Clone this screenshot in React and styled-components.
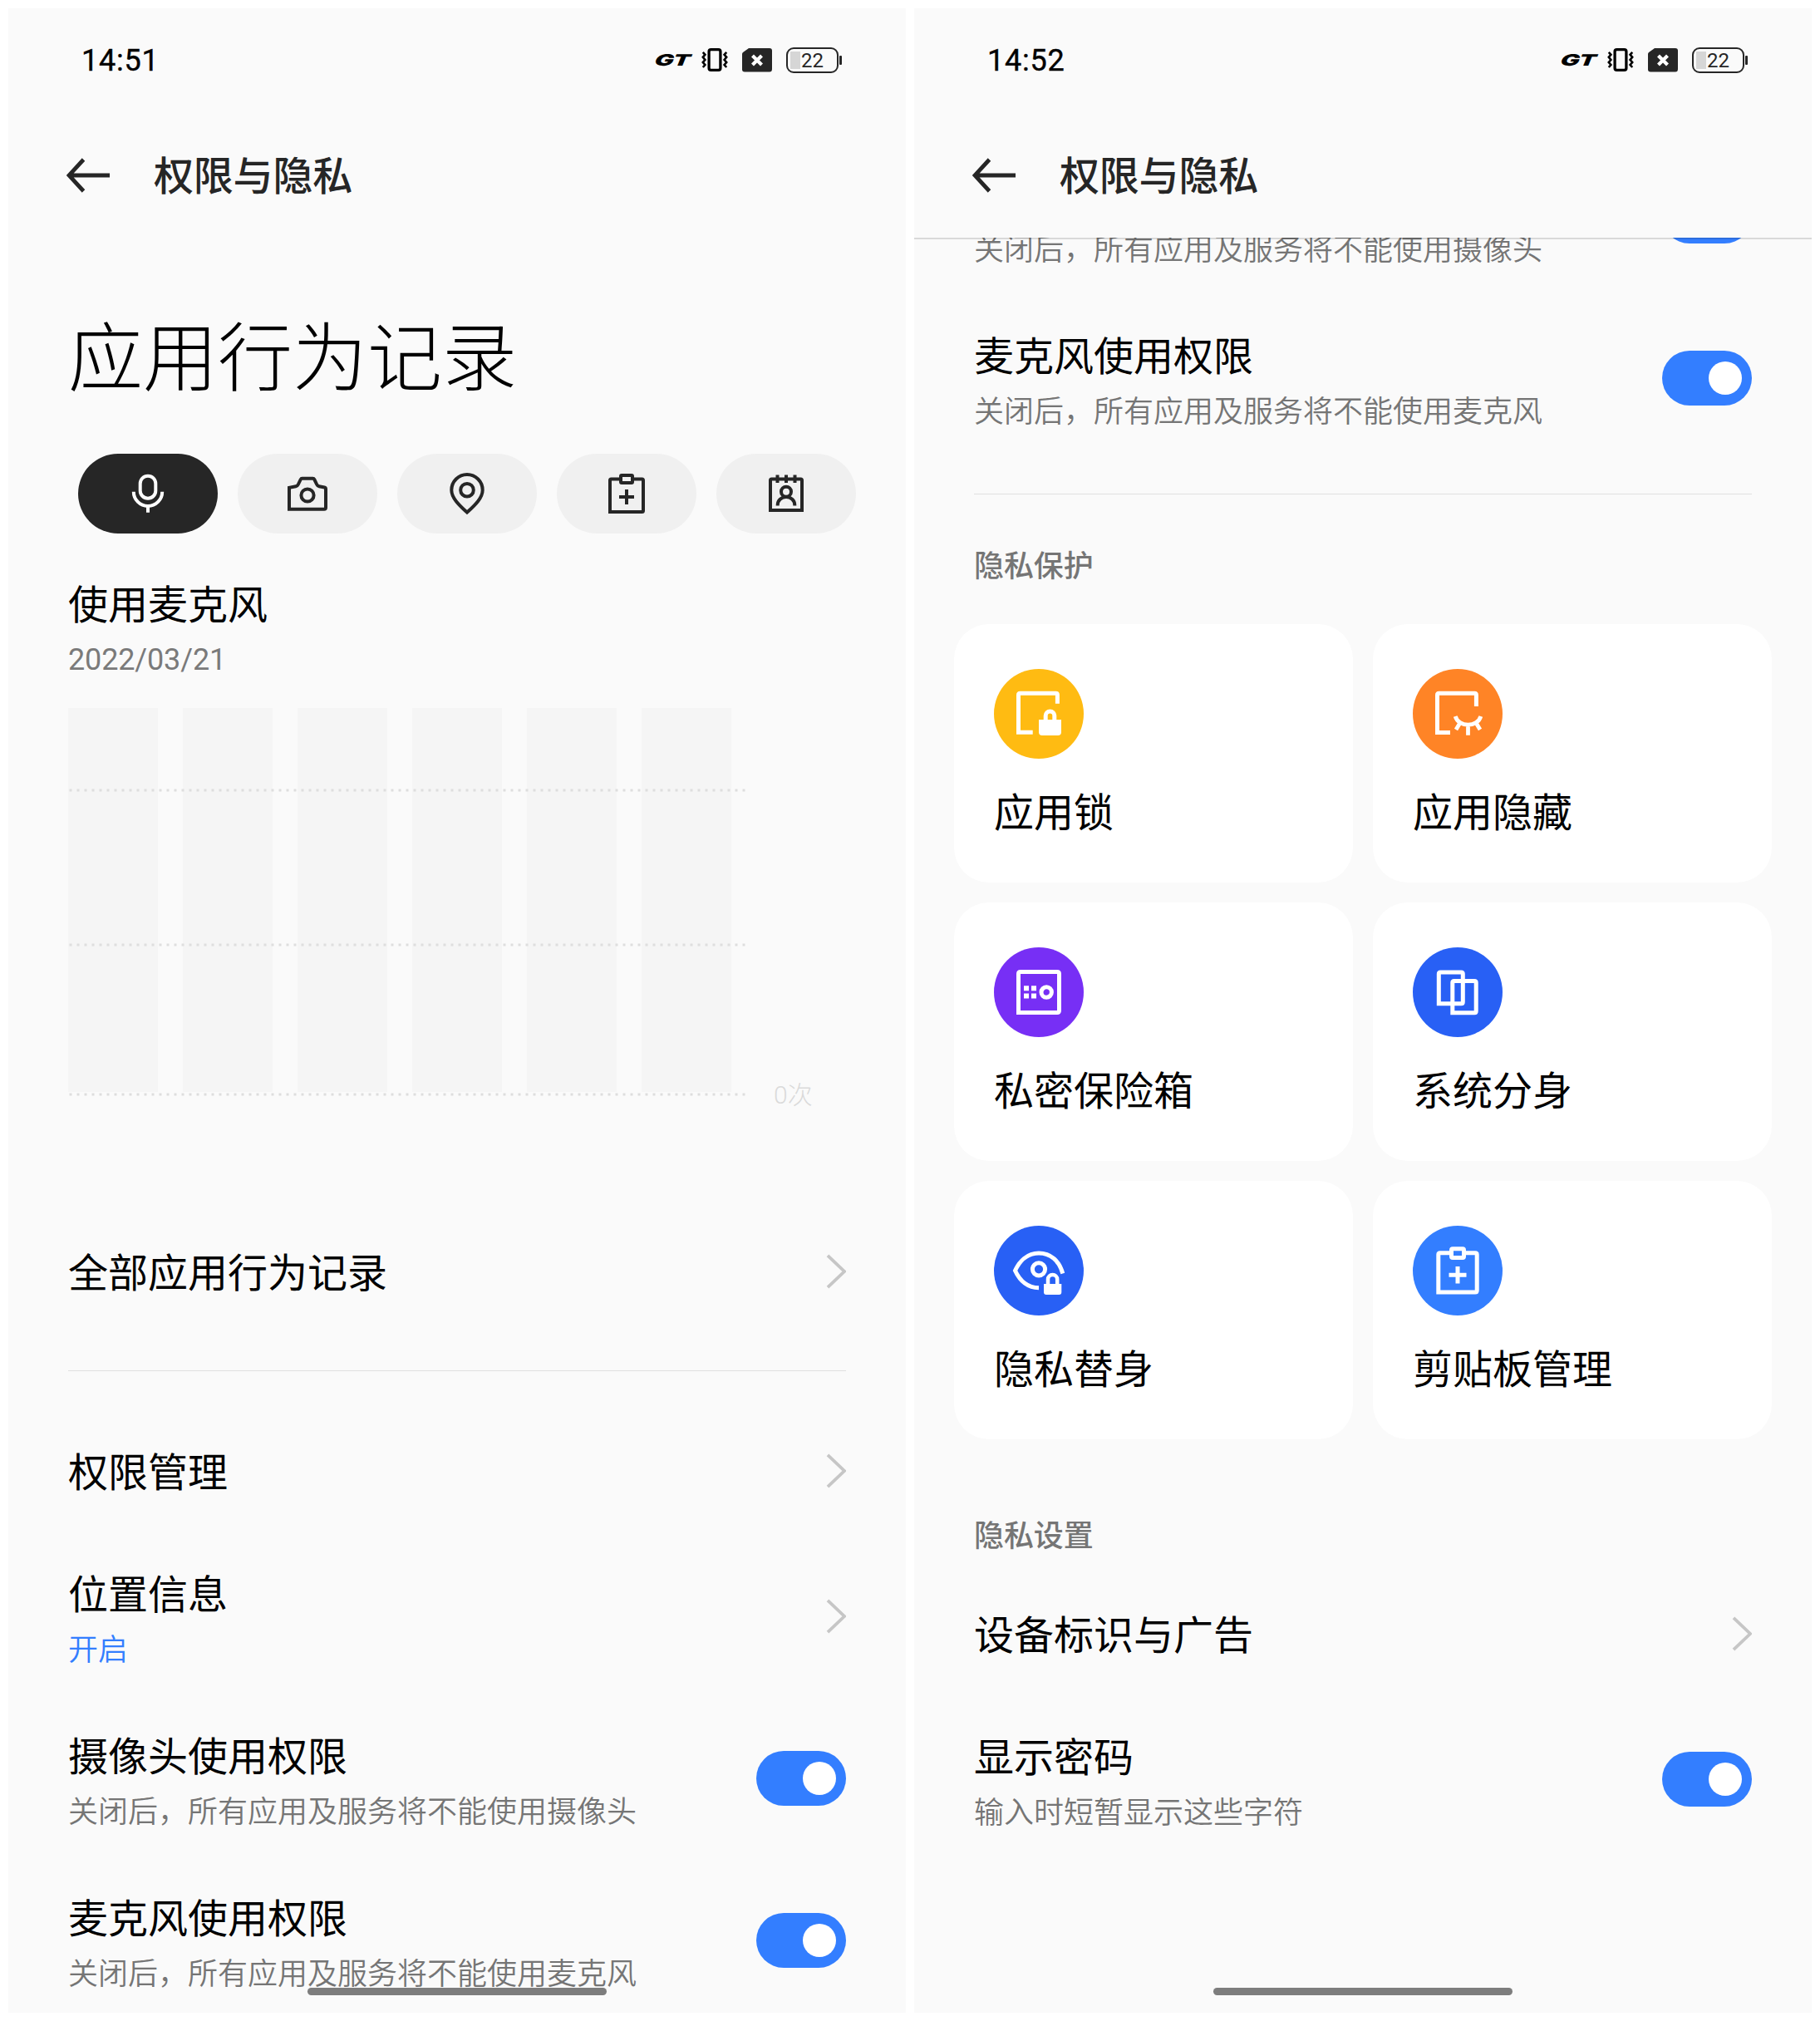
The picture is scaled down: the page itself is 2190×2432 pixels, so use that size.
import React, { useState } from "react";
import styled, { createGlobalStyle } from "styled-components";

const GlobalStyle = createGlobalStyle`
  * {
    box-sizing: border-box;
  }

  body {
    margin: 0;
    background: #ffffff;
    font-family: Roboto, "Noto Sans CJK SC", sans-serif;
    color: #000000;
  }
`;

const Page = styled.div`
  display: flex;
  gap: 10px;
  width: 2190px;
  height: 2432px;
  padding: 10px;
`;

const Phone = styled.section`
  position: relative;
  display: flex;
  flex-direction: column;
  width: 1080px;
  height: 2412px;
  overflow: hidden;
  background: #fafafa;
`;

const Header = styled.header`
  flex: none;
  position: relative;
  z-index: 1;
  background: #fafafa;
  box-shadow: ${(p) => (p.$scrolled ? "0 2px 0 rgba(0, 0, 0, 0.13)" : "none")};
`;

const StatusBar = styled.div`
  display: flex;
  align-items: center;
  justify-content: space-between;
  height: 124px;
  padding: 0 77px 0 88px;
`;

const Clock = styled.span`
  padding-top: 2px;
  font-size: 36px;
  line-height: 40px;
  letter-spacing: 0.8px;
  -webkit-text-stroke: 0.4px #000000;
`;

const StatusIcons = styled.div`
  display: flex;
  align-items: center;
`;

const GtBadge = styled.span`
  width: 45px;
  margin-right: 8px;
  padding-top: 2px;
  font-family: Inter, sans-serif;
  font-size: 19px;
  font-weight: 900;
  line-height: 20px;
  white-space: nowrap;
  transform: scaleX(1.6) skewX(-14deg);
  transform-origin: 4px 50%;
`;

const VibrateIcon = styled.svg`
  width: 32px;
  height: 30px;
  margin-right: 17px;
`;

const SimIcon = styled.svg`
  width: 36px;
  height: 30px;
  margin-right: 17px;
`;

const Battery = styled.div`
  display: flex;
  align-items: center;
  gap: 1px;

  &::after {
    content: "";
    width: 3px;
    height: 11px;
    border-radius: 1px;
    background: #262626;
  }
`;

const BatteryCell = styled.div`
  width: 63px;
  height: 31px;
  padding: 3px;
  border: 2px solid #262626;
  border-radius: 9px;
  background: linear-gradient(#d6d6d6, #d6d6d6) 3px 3px / 12px 21px no-repeat;
  font-size: 24px;
  line-height: 22px;
  text-align: center;
  color: #262626;
`;

const AppBar = styled.div`
  display: flex;
  align-items: center;
  gap: 49px;
  height: 152px;
  padding: 2px 0 0 70px;
`;

const BackArrow = styled.svg`
  width: 56px;
  height: 44px;
`;

const AppTitle = styled.h1`
  margin: 0;
  padding-top: 4px;
  font-size: 48px;
  font-weight: 500;
  line-height: 60px;
  letter-spacing: -0.2px;
  color: #262626;
`;

const Content = styled.main`
  flex: 1;
  min-height: 0;
  padding: 0 72px;
  overflow: hidden;
`;

const ScrolledContent = styled.div`
  margin-top: -123.5px;
`;

const Heading = styled.h2`
  margin: 83px 0 49px;
  font-size: 90px;
  font-weight: 300;
  line-height: 128px;
`;

const Chips = styled.div`
  display: flex;
  gap: 24px;
  margin-left: 12px;
`;

const Chip = styled.button`
  flex: none;
  display: flex;
  align-items: center;
  justify-content: center;
  width: 168px;
  height: 96px;
  padding: 0;
  border: none;
  border-radius: 48px;
  background: ${(p) => (p.$active ? "#262626" : "#f0f0f0")};
  color: ${(p) => (p.$active ? "#ffffff" : "#262626")};
`;

const ChipIcon = styled.svg`
  width: 56px;
  height: 56px;
  fill: none;
  stroke: currentColor;
  stroke-width: 4;
`;

const UsageTitle = styled.div`
  margin-top: 47px;
  font-size: 48px;
  line-height: 80px;
`;

const UsageDate = styled.div`
  font-size: 36px;
  line-height: 50px;
  letter-spacing: -0.15px;
  color: #7a7a7a;
`;

const ChartArea = styled.div`
  display: flex;
  align-items: flex-end;
  gap: 19px;
  height: 470px;
  margin: 33px 0 130.5px;
`;

const ChartLabel = styled.span`
  font-size: 30px;
  font-weight: 300;
  line-height: 30px;
  margin-bottom: -11px;
  color: #dadada;
`;

const Divider = styled.hr`
  height: 1px;
  margin: 41.5px 0 42.5px;
  border: none;
  background: #e0e0e0;
`;

const Row = styled.div`
  display: flex;
  align-items: center;
  justify-content: space-between;
  height: ${(p) => (p.$double ? 195 : 155)}px;
`;

const RowText = styled.div`
  padding-top: ${(p) => (p.$double ? 2 : 5)}px;
`;

const RowTitle = styled.div`
  min-height: 80px;
  font-size: 48px;
  line-height: 80px;
`;

const RowNote = styled.div`
  font-size: 36px;
  font-weight: 350;
  line-height: 52px;
  color: ${(p) => (p.$accent ? "#337eff" : "#757575")};
`;

const Chevron = styled.svg`
  width: 26px;
  height: 44px;
`;

const Switch = styled.button`
  display: flex;
  align-items: center;
  justify-content: ${(p) => (p.$on ? "flex-end" : "flex-start")};
  width: 108px;
  height: 66px;
  padding: 0 12.5px;
  border: none;
  border-radius: 33px;
  background: ${(p) => (p.$on ? "#337eff" : "#d9d9d9")};
`;

const Knob = styled.span`
  width: 40px;
  height: 40px;
  border-radius: 50%;
  background: #ffffff;
`;

const SectionLabel = styled.h3`
  margin: ${(p) => p.$margin};
  font-size: 36px;
  font-weight: 500;
  line-height: 54px;
  letter-spacing: -0.1px;
  color: #757575;
`;

const CardGrid = styled.div`
  display: grid;
  grid-template-columns: 480px 480px;
  grid-auto-rows: 311px;
  gap: 24px;
  margin: 0 -24px;
`;

const Card = styled.div`
  display: flex;
  flex-direction: column;
  padding: 54px 48px 0;
  border-radius: 42px;
  background: #ffffff;
`;

const CardIcon = styled.span`
  display: flex;
  width: 108px;
  height: 108px;
  border-radius: 50%;
  background: ${(p) => p.$color};

  svg {
    width: 108px;
    height: 108px;
    fill: none;
    stroke: #ffffff;
    stroke-width: 5;
  }
`;

const CardTitle = styled.div`
  margin-top: 26px;
  font-size: 48px;
  line-height: 80px;
`;

const HomeBar = styled.div`
  position: absolute;
  left: 360px;
  bottom: 21px;
  z-index: 2;
  width: 360px;
  height: 9px;
  border-radius: 5px;
  background: #7d7d7d;
`;

const chips = [
  {
    id: "mic",
    icon: (
      <>
        <rect x="-9.3" y="-21.3" width="18.6" height="27" rx="9.3" />
        <path d="M-17.2 -2.3A17.2 17.3 0 0 0 17.2 -2.3M0 15V22.7" />
      </>
    ),
  },
  {
    id: "camera",
    icon: (
      <>
        <path d="M-22 18.7V-7.2L-14 -8.8Q-12 -9.2 -11.2 -11L-8.3 -17Q-7.7 -18.2 -6.5 -18.2H6.5Q7.7 -18.2 8.3 -17L11.2 -11Q12 -9.2 14 -8.8L20.4 -7.5Q22 -7.2 22 -5.6V16.7Q22 18.7 20 18.7Z" />
        <circle cy="2" r="7.6" />
      </>
    ),
  },
  {
    id: "location",
    icon: (
      <>
        <path d="M0 22.6C-7.5 15.5 -18.7 6 -18.7 -4.3A18.7 18.7 0 0 1 18.7 -4.3C18.7 6 7.5 15.5 0 22.6Z" />
        <circle cy="-4.3" r="7.8" />
      </>
    ),
  },
  {
    id: "clipboard",
    icon: (
      <>
        <path d="M-7.5 -17.5H-18.5Q-20 -17.5 -20 -16V22H18.5Q20 22 20 20.5V-16Q20 -17.5 18.5 -17.5H7.5" />
        <rect x="-7" y="-22" width="14" height="9" rx="1" />
        <path d="M-9 4H9M0 -5V13" />
      </>
    ),
  },
  {
    id: "contacts",
    icon: (
      <>
        <path d="M-19 20V-16Q-19 -17.5 -17.5 -17.5H17.5Q19 -17.5 19 -16V20Z" />
        <path d="M-10.5 -22.5V-13M0 -22.5V-13M10.5 -22.5V-13" />
        <circle cy="-2.3" r="6" />
        <path d="M-10.3 14.5V13.7A10.3 9.8 0 0 1 10.3 13.7V14.5" />
      </>
    ),
  },
];

const cards = [
  {
    title: "应用锁",
    color: "#ffbb12",
    icon: (
      <>
        <path d="M22.4 -12.3V-23Q22.4 -24.8 20.4 -24.8H-22.5Q-24.5 -24.8 -24.5 -22.8V22.2H-7.3" />
        <path d="M8.2 9V2.3A5.3 5.3 0 0 1 18.8 2.3V9" />
        <path d="M0 7H27V22Q27 26 23 26H4Q0 26 0 22Z" fill="#ffffff" stroke="none" />
      </>
    ),
  },
  {
    title: "应用隐藏",
    color: "#ff8426",
    icon: (
      <>
        <path d="M22.4 -9V-22.8Q22.4 -24.8 20.4 -24.8H-22.5Q-24.5 -24.8 -24.5 -22.8V22.4H-9" />
        <path d="M-2.8 3C1 16.5 24 16.5 27.8 3M12.5 14V25.7M2.5 11.5L-2 19M22.5 11.5L27 19" strokeWidth="4.8" />
      </>
    ),
  },
  {
    title: "私密保险箱",
    color: "#772ff5",
    icon: (
      <>
        <path d="M-24.5 24.5V-22Q-24.5 -24.5 -22 -24.5H22Q24.5 -24.5 24.5 -22V22Q24.5 24.5 22 24.5Z" />
        <path d="M-18 -7.7h6v6h-6zM-9 -7.7h6v6h-6zM-18 1.6h6v6h-6zM-9 1.6h6v6h-6z" fill="#ffffff" stroke="none" />
        <circle cx="9.2" r="6.2" />
      </>
    ),
  },
  {
    title: "系统分身",
    color: "#2860f5",
    icon: (
      <>
        <path d="M-22.7 13.8V-22Q-22.7 -24 -20.7 -24H4.3Q6.3 -24 6.3 -22V11.8Q6.3 13.8 4.3 13.8Z" />
        <path d="M-6.2 24.8V-11.4Q-6.2 -13.4 -4.2 -13.4H20.2Q22.2 -13.4 22.2 -11.4V22.8Q22.2 24.8 20.2 24.8Z" />
      </>
    ),
  },
  {
    title: "隐私替身",
    color: "#2860f5",
    icon: (
      <>
        <path d="M28.8 3.5C24.5 -12 14 -21 0 -21S-23.5 -11 -28.5 0C-22.5 13 -14 20.5 0 20.8" />
        <circle cy="-1.7" r="7.6" />
        <path d="M11 17V10.5A5.6 5.6 0 0 1 22.2 10.5V17" strokeWidth="4.5" />
        <path d="M6 16H27.3V26Q27.3 29 24.3 29H9Q6 29 6 26Z" fill="#ffffff" stroke="none" />
      </>
    ),
  },
  {
    title: "剪贴板管理",
    color: "#337eff",
    icon: (
      <>
        <path d="M-8 -21.3H-21.2Q-23.2 -21.3 -23.2 -19.3V26H21.2Q23.2 26 23.2 24V-19.3Q23.2 -21.3 21.2 -21.3H8" />
        <rect x="-7.5" y="-26.3" width="15" height="10.8" rx="1.5" />
        <path d="M-10.5 5.3H10.5M0 -5V15.6" />
      </>
    ),
  },
];

const bars = [0, 138, 276, 414, 552, 690];
const gridLines = [99, 285, 465];

const StatusHeader = ({ time, scrolled }) => (
  <Header $scrolled={scrolled}>
    <StatusBar>
      <Clock>{time}</Clock>
      <StatusIcons>
        <GtBadge>GT</GtBadge>
        <VibrateIcon viewBox="-16 -15 32 30" fill="none" stroke="#000000">
          <rect x="-6.9" y="-12.4" width="13.8" height="24.8" rx="2.4" strokeWidth="3.3" />
          <path
            d="M-14.2 -9.2L-11.6 -6.2L-14.2 -3.2L-11.6 0L-14.2 3L-11.6 6L-14.2 9M14.2 -9.2L11.6 -6.2L14.2 -3.2L11.6 0L14.2 3L11.6 6L14.2 9"
            strokeWidth="2.6"
          />
        </VibrateIcon>
        <SimIcon viewBox="0 0 36 30">
          <path d="M8 1H33Q36 1 36 4V26Q36 29.5 33 29.5H3Q0 29.5 0 26.5V8Q0 7 1 6Z" fill="#262626" />
          <path d="M12.5 10L23.5 21M23.5 10L12.5 21" stroke="#ffffff" strokeWidth="4.2" />
        </SimIcon>
        <Battery>
          <BatteryCell>22</BatteryCell>
        </Battery>
      </StatusIcons>
    </StatusBar>
    <AppBar>
      <BackArrow viewBox="0 0 56 44" fill="none" stroke="#262626" strokeWidth="4.8">
        <path d="M20.5 3L3 22L20.5 41M3 22H52" />
      </BackArrow>
      <AppTitle>权限与隐私</AppTitle>
    </AppBar>
  </Header>
);

const UsageChart = () => (
  <ChartArea>
    <svg width="830" height="470">
      {bars.map((x) => (
        <rect key={x} x={x} y="0" width="108" height="462" fill="#f5f5f5" />
      ))}
      {gridLines.map((y) => (
        <line key={y} x1="1.5" x2="816" y1={y} y2={y} stroke="#dedede" strokeWidth="3" strokeDasharray="3 6" />
      ))}
    </svg>
    <ChartLabel>0次</ChartLabel>
  </ChartArea>
);

const LinkRow = ({ title, note }) => (
  <Row $double={Boolean(note)}>
    <RowText $double={Boolean(note)}>
      <RowTitle>{title}</RowTitle>
      {note && <RowNote $accent>{note}</RowNote>}
    </RowText>
    <Chevron viewBox="0 0 26 44" fill="none" stroke="#c6c6c6" strokeWidth="3.8">
      <path d="M4 2.8L24 22L4 41.2" />
    </Chevron>
  </Row>
);

const SwitchRow = ({ title, note }) => {
  const [on, setOn] = useState(true);

  return (
    <Row $double>
      <RowText $double>
        <RowTitle>{title}</RowTitle>
        <RowNote>{note}</RowNote>
      </RowText>
      <Switch $on={on} onClick={() => setOn(!on)}>
        <Knob />
      </Switch>
    </Row>
  );
};

const App = () => {
  const [activeChip, setActiveChip] = useState("mic");

  return (
    <Page>
      <GlobalStyle />

      <Phone>
        <StatusHeader time="14:51" />
        <Content>
          <Heading>应用行为记录</Heading>
          <Chips>
            {chips.map((chip) => (
              <Chip key={chip.id} $active={chip.id === activeChip} onClick={() => setActiveChip(chip.id)}>
                <ChipIcon viewBox="-28 -28 56 56">{chip.icon}</ChipIcon>
              </Chip>
            ))}
          </Chips>
          <UsageTitle>使用麦克风</UsageTitle>
          <UsageDate>2022/03/21</UsageDate>
          <UsageChart />
          <LinkRow title="全部应用行为记录" />
          <Divider />
          <LinkRow title="权限管理" />
          <LinkRow title="位置信息" note="开启" />
          <SwitchRow title="摄像头使用权限" note="关闭后，所有应用及服务将不能使用摄像头" />
          <SwitchRow title="麦克风使用权限" note="关闭后，所有应用及服务将不能使用麦克风" />
        </Content>
        <HomeBar />
      </Phone>

      <Phone>
        <StatusHeader time="14:52" scrolled />
        <Content>
          <ScrolledContent>
            {/* scrolled half way under the header, only the note is left */}
            <SwitchRow note="关闭后，所有应用及服务将不能使用摄像头" />
            <SwitchRow title="麦克风使用权限" note="关闭后，所有应用及服务将不能使用麦克风" />
            <Divider />
            <SectionLabel $margin="60px 0 42px">隐私保护</SectionLabel>
            <CardGrid>
              {cards.map((card) => (
                <Card key={card.title}>
                  <CardIcon $color={card.color}>
                    <svg viewBox="-54 -54 108 108">{card.icon}</svg>
                  </CardIcon>
                  <CardTitle>{card.title}</CardTitle>
                </Card>
              ))}
            </CardGrid>
            <SectionLabel $margin="90px 0 12.5px">隐私设置</SectionLabel>
            <LinkRow title="设备标识与广告" />
            <SwitchRow title="显示密码" note="输入时短暂显示这些字符" />
          </ScrolledContent>
        </Content>
        <HomeBar />
      </Phone>
    </Page>
  );
};

export default App;
